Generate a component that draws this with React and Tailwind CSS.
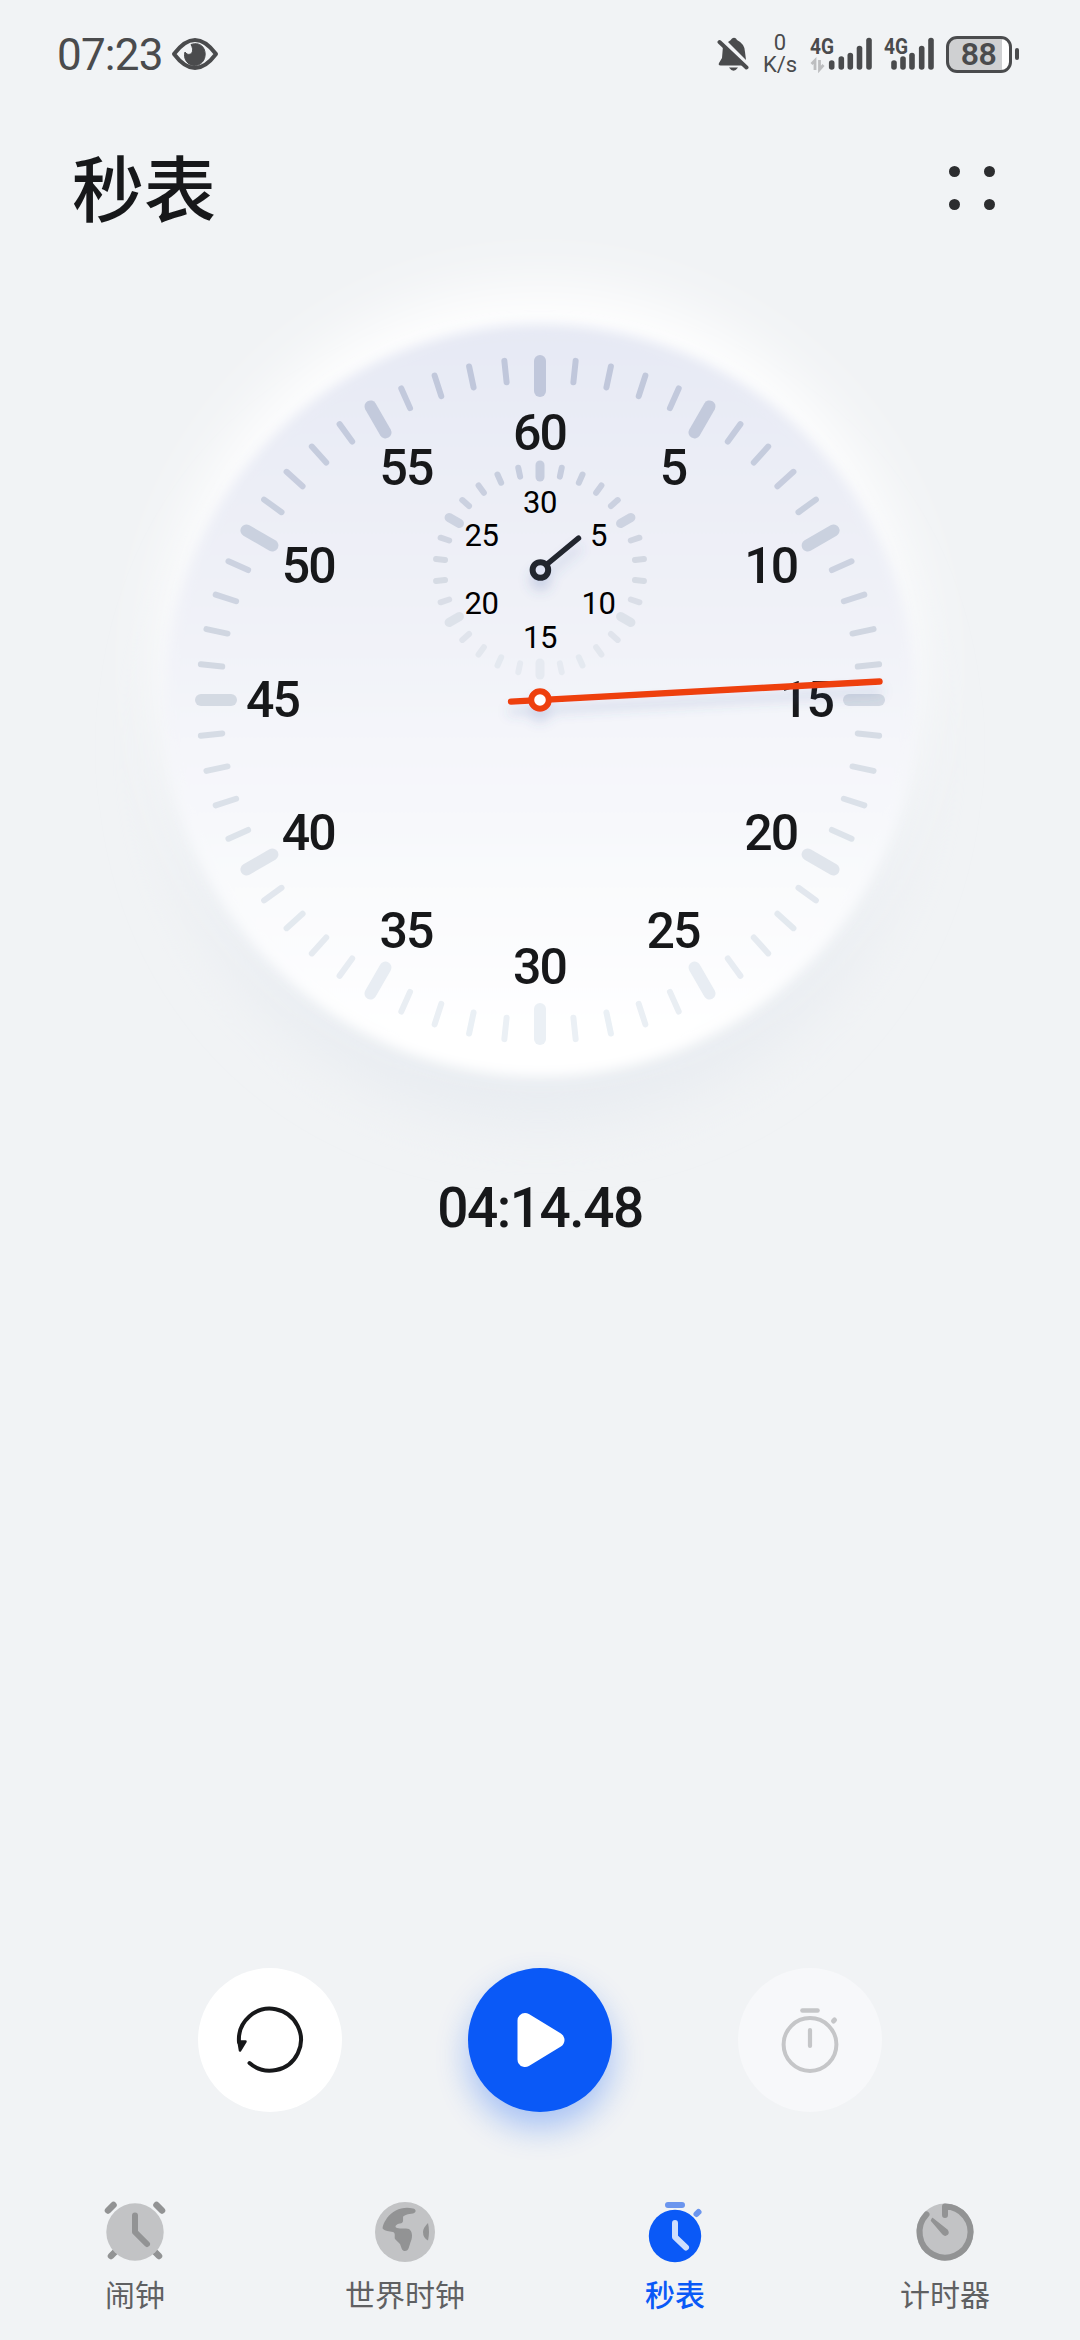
import React from "react";

const FONT = "font-[Roboto,'Noto_Sans_CJK_SC',sans-serif]";
const CX = 450;
const CY = 460;

function polar(cx, cy, r, deg) {
  const a = (deg * Math.PI) / 180;
  return [cx + r * Math.sin(a), cy - r * Math.cos(a)];
}

const OUTER_STOPS = [[192, 199, 219], [212, 218, 227], [235, 240, 245]];
const INNER_STOPS = [[198, 205, 222], [212, 217, 227], [230, 234, 241]];

function shade(stops, deg) {
  const t = 1 - Math.cos((deg * Math.PI) / 180);
  const i = t < 1 ? 0 : 1;
  const f = t - i;
  return `rgb(${stops[i].map((v, k) => Math.round(v + (stops[i + 1][k] - v) * f)).join(",")})`;
}

function Ticks({ cx, cy, count, major, minor, stops }) {
  return Array.from({ length: count }, (_, i) => {
    const deg = (i * 360) / count;
    const [outer, inner, width] = i % 5 === 0 ? major : minor;
    const [x1, y1] = polar(cx, cy, outer - width / 2, deg);
    const [x2, y2] = polar(cx, cy, inner + width / 2, deg);
    return (
      <line key={i} x1={x1} y1={y1} x2={x2} y2={y2} stroke={shade(stops, deg)} strokeWidth={width} strokeLinecap="round" />
    );
  });
}

function Numerals({ cx, cy, r, max, drop, className }) {
  const n = max / 5;
  return Array.from({ length: n }, (_, i) => {
    const [x, y] = polar(cx, cy, r, (i * 360) / n);
    return (
      <text key={i} x={x} y={y + drop} textAnchor="middle" className={className}>
        {i === 0 ? max : i * 5}
      </text>
    );
  });
}

function Dial() {
  const subY = CY - 130;
  const secDeg = (14.48 / 60) * 360;
  const [sx, sy] = polar(CX, CY, 340, secDeg);
  const [tx, ty] = polar(CX, CY, -29, secDeg);
  const [mx, my] = polar(CX, subY, 50, 50.4);
  return (
    <svg viewBox="0 0 900 960" className="h-[960px] w-[900px] shrink-0 overflow-visible">
      <defs>
        <linearGradient id="face" x1="0" y1="0" x2="0" y2="1">
          <stop offset="0" stopColor="#e6e9f4" />
          <stop offset="0.5" stopColor="#f3f4f9" />
          <stop offset="0.78" stopColor="#fafbfd" />
          <stop offset="0.95" stopColor="#ffffff" />
        </linearGradient>
        <filter id="soft" x="-5%" y="-5%" width="110%" height="110%">
          <feGaussianBlur stdDeviation="6" />
        </filter>
        <filter id="wide" x="-30%" y="-30%" width="160%" height="160%">
          <feGaussianBlur stdDeviation="30" />
        </filter>
        <filter id="handShadow" x="0" y="0" width="900" height="960" filterUnits="userSpaceOnUse">
          <feDropShadow dx="0" dy="10" stdDeviation="6" floodColor="#4a62a8" floodOpacity="0.2" />
        </filter>
      </defs>
      <circle cx={CX} cy={CY + 48} r="374" fill="#e8ecf1" filter="url(#wide)" />
      <circle cx={CX} cy={CY - 36} r="376" fill="#ffffff" filter="url(#wide)" />
      <circle cx={CX} cy={CY} r="376" fill="url(#face)" filter="url(#soft)" />
      <Ticks cx={CX} cy={CY} count={60} major={[345, 303, 12]} minor={[344, 316.5, 6]} stops={OUTER_STOPS} />
      <Ticks cx={CX} cy={subY} count={30} major={[109.5, 88.5, 9]} minor={[107.5, 92.5, 6]} stops={INNER_STOPS} />
      <Numerals cx={CX - 0.5} cy={CY} r={267} max={60} drop={16.5} className="fill-[#17181a] text-[50px] font-medium tracking-[-2px]" />
      <Numerals cx={CX} cy={subY} r={67.5} max={30} drop={10} className="fill-black text-[31px] tracking-[-0.4px]" />
      <g filter="url(#handShadow)">
        <line x1={CX} y1={subY} x2={mx} y2={my} stroke="#22252e" strokeWidth="5.4" strokeLinecap="round" />
        <circle cx={CX + 0.4} cy={subY} r="7.8" fill="#e0e4f4" stroke="#22252e" strokeWidth="6" />
      </g>
      <g filter="url(#handShadow)">
        <line x1={tx} y1={ty} x2={sx} y2={sy} stroke="#ee4110" strokeWidth="6.4" strokeLinecap="round" />
        <circle cx={CX} cy={CY} r="8.8" fill="#ffffff" stroke="#ee4110" strokeWidth="6" />
      </g>
    </svg>
  );
}

function Signal({ heights, arrows }) {
  return (
    <svg viewBox="0 0 66 40" className="h-[40px] w-[66px]">
      <text x="0" y="19.500" textLength="24" lengthAdjust="spacingAndGlyphs" className="fill-[#4a4b4d] text-[22px] font-bold">4G</text>
      {heights.map(([x, top], i) => (
        <line key={i} x1={x} x2={x} y1={top + 3} y2="33" stroke="#4a4b4d" strokeWidth="5.6" strokeLinecap="round" />
      ))}
      {arrows && <path d="M5 36V26.500L1.500 30M9.500 26V35.500L13.500 31" fill="none" stroke="#bdbec0" strokeWidth="2.800" />}
    </svg>
  );
}

function StatusBar() {
  return (
    <div className="flex h-[108px] shrink-0 items-center justify-between pr-[61px] pl-[57px] text-[#4a4b4d]">
      <div className="flex items-center">
        <span className="w-[108px] pt-[2px] text-[44px] leading-[56px] font-[450] tracking-[-0.8px]">07:23</span>
        <svg viewBox="0 0 48 34" className="ml-[6px] h-[34px] w-[48px]">
          <path d="M3 17Q24-11 45 17Q24 45 3 17Z" fill="none" stroke="#4a4b4d" strokeWidth="4" strokeLinejoin="round" />
          <path d="M20 7.500C37 2 39 27 24.500 28.500C16 29 12 21 14 15C17 20 25 17 20 7.500Z" fill="#4a4b4d" stroke="#4a4b4d" strokeWidth="1" />
        </svg>
      </div>
      <div className="flex items-center">
        <svg viewBox="0 0 32 36" className="h-[36px] w-[32px]">
          <path d="M6 10L25 29.500H3.500Q1 29.500 2 27L5 22Z" fill="#4a4b4d" />
          <path d="M11 6Q14 4 15 2.500Q17 1 19 2.500L20 4Q28 8 28 16L29 24Z" fill="#4a4b4d" />
          <path d="M2.500 6L29.500 31.500" stroke="#4a4b4d" strokeWidth="4" strokeLinecap="round" />
          <path d="M12 31.500H21Q16.500 38 12 31.500Z" fill="#4a4b4d" />
        </svg>
        <div className="ml-[13px] flex w-[36px] flex-col items-center text-[22px] leading-[22px]">
          <span>0</span>
          <span>K/s</span>
        </div>
        <div className="ml-[12px]">
          <Signal arrows heights={[[21.7, 26], [31.3, 22], [40.3, 18.5], [49.5, 11.5], [59, 3.5]]} />
        </div>
        <div className="ml-[8px]">
          <Signal heights={[[10, 26], [19, 22], [28, 18.5], [37.7, 11.5], [47, 3.5]]} />
        </div>
        <div className="-ml-[4px] flex items-center gap-[3px]">
          <div className="flex h-[37px] w-[66px] items-center justify-center rounded-[11px] border-[3px] border-[#4a4b4d] bg-linear-to-r from-[#cfd0d2] from-88% to-white to-88% pr-px text-[32px] leading-none font-semibold tracking-[-0.5px]">
            <span>88</span>
          </div>
          <div className="h-[12px] w-[4px] rounded-full bg-[#4a4b4d]" />
        </div>
      </div>
    </div>
  );
}

function AlarmIcon() {
  return (
    <svg viewBox="-32 -32 64 64" className="size-[64px]">
      <g stroke="#929394" strokeWidth="6.500" strokeLinecap="round">
        <path d="M-27-21.500L-21.500-27M27-21.500L21.500-27M-24 24L-20 20M24 24L20 20" />
      </g>
      <circle r="28.700" fill="#c2c3c5" />
      <path d="M0-16.500V0L12 12" fill="none" stroke="#929394" strokeWidth="6" strokeLinecap="round" strokeLinejoin="round" />
    </svg>
  );
}

function GlobeIcon() {
  return (
    <svg viewBox="-32 -32 64 64" className="size-[64px]">
      <circle r="30" fill="#c2c3c5" />
      <path d="M8-23.500C-2-26-12-22-18-14C-22-8-23-4-22-3C-20-1-16-1-12 0C-9 1-11 5-10 7L-5 12C-3 17-3 19 0 19C4 19 4 14 6 9C8 4 7-1 4-3C0-4-4-3-8-4C-11-5-9-8-5-8.500C-1-9-2-12-2-15C-1-17 3-18 8-18.500C12-20 11-23 8-23.500Z" fill="#929394" />
      <path d="M23-9Q18-4 18 0Q18 6 23 8.500Q25 0 23-9Z" fill="#929394" />
    </svg>
  );
}

function StopwatchIcon() {
  return (
    <svg viewBox="-32 -32 64 64" className="size-[64px]">
      <path d="M-7-27H7M21.500-18L23.500-20" stroke="#6b95ee" strokeWidth="6" strokeLinecap="round" />
      <circle cy="4" r="26.200" fill="#0a59f7" />
      <path d="M0-9V5L11 15.500" fill="none" stroke="#cedefd" strokeWidth="6" strokeLinecap="round" strokeLinejoin="round" />
    </svg>
  );
}

function TimerIcon() {
  return (
    <svg viewBox="-32 -32 64 64" className="size-[64px]">
      <circle r="28.500" fill="#c2c3c5" />
      <path d="M0-17V-25.500A25.500 25.500 0 1 1-18.500-17.500" fill="none" stroke="#929394" strokeWidth="6" strokeLinecap="round" strokeLinejoin="round" />
      <path d="M-12.500-13.500L2-2Q4 1 2 2.500Q0 4-2 2L-13.500-11.500Z" fill="#929394" stroke="#929394" strokeWidth="1.500" strokeLinejoin="round" />
    </svg>
  );
}

const TABS = [
  { label: "闹钟", Icon: AlarmIcon },
  { label: "世界时钟", Icon: GlobeIcon },
  { label: "秒表", Icon: StopwatchIcon, active: true },
  { label: "计时器", Icon: TimerIcon },
];

export default function App() {
  return (
    <div className={`flex h-[2340px] w-[1080px] flex-col overflow-hidden bg-[#f1f3f5] ${FONT}`}>
      <StatusBar />
      <header className="flex h-[162px] shrink-0 items-center justify-between pr-[85px] pb-[2px] pl-[72px]">
        <h1 className="pt-[8px] text-[72px] leading-[100px] font-medium text-[#17181a]">秒表</h1>
        <div className="grid grid-cols-2 gap-x-[24px] gap-y-[22px]">
          {[0, 1, 2, 3].map((i) => (
            <span key={i} className="size-[11px] rounded-full bg-[#2c2d2f]" />
          ))}
        </div>
      </header>
      <main className="flex flex-1 flex-col items-center">
        <div className="-mt-[30px] flex">
          <Dial />
        </div>
        <div className="-mt-[27px] text-[55px] leading-[70px] font-medium tracking-[-1.5px] text-[#17181a]">04:14.48</div>
      </main>
      <div className="flex shrink-0 justify-center gap-[126px] pb-[80px]">
        <button className="flex size-[144px] items-center justify-center rounded-full bg-white">
          <svg viewBox="-36 -36 72 72" className="size-[72px]">
            <path d="M-20.500 23A31 31 0 1 0-31 2" fill="none" stroke="#17181a" strokeWidth="4" strokeLinecap="round" />
            <path d="M-31.500 1.500H-24.500L-30 10.500Z" fill="#17181a" stroke="#17181a" strokeWidth="2.500" strokeLinejoin="round" />
          </svg>
        </button>
        <button className="flex size-[144px] items-center justify-center rounded-full bg-[#0a59f7] shadow-[0_16px_32px_rgba(10,89,247,0.32)]">
          <svg viewBox="-36 -36 72 72" className="size-[72px]">
            <path d="M-15-19.500L17 0L-15 19.500Z" fill="#fff" stroke="#fff" strokeWidth="15" strokeLinejoin="round" />
          </svg>
        </button>
        <button className="flex size-[144px] items-center justify-center rounded-full bg-[#f7f8fa]">
          <svg viewBox="-36 -36 72 72" className="size-[72px]" fill="none" stroke="#c5c6c8" strokeLinecap="round">
            <circle cy="4.500" r="26.400" strokeWidth="4" />
            <path d="M-7.500-29.500H7.500" strokeWidth="4.600" />
            <path d="M0-10V6" strokeWidth="4.200" />
            <path d="M23.500-19L24.500-20" strokeWidth="5" />
          </svg>
        </button>
      </div>
      <nav className="grid h-[148px] shrink-0 grid-cols-4 pt-[8px]">
        {TABS.map(({ label, Icon, active }) => (
          <div key={label} className="flex flex-col items-center">
            <Icon />
            <span className={active ? "mt-[10px] text-[30px] leading-[44px] font-medium text-[#0a59f7]" : "mt-[10px] text-[30px] leading-[44px] text-[#5f6062]"}>
              {label}
            </span>
          </div>
        ))}
      </nav>
    </div>
  );
}
